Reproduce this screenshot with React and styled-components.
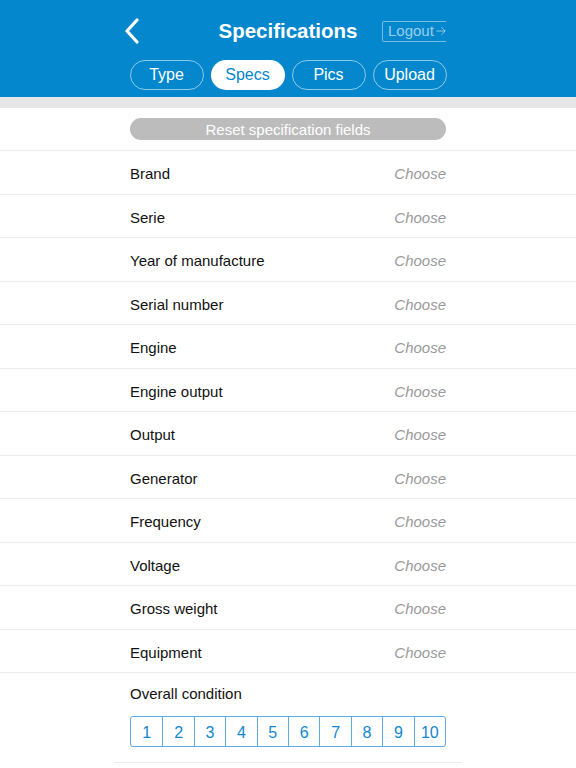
import React from 'react';
import styled, { createGlobalStyle } from 'styled-components';

const GlobalStyle = createGlobalStyle`
  body {
    margin: 0;
    background: #ffffff;
    font-family: "Liberation Sans", Arial, sans-serif;
  }
`;

const BLUE = '#0487cc';

const Header = styled.header`
  background: ${BLUE};
  height: 97px;
  display: flex;
  flex-direction: column;
  align-items: center;
`;

const TopBar = styled.div`
  width: 316px;
  height: 60px;
  display: flex;
  align-items: center;
  justify-content: space-between;
  padding-top: 2px;
  box-sizing: border-box;
`;

const BackButton = styled.button`
  background: none;
  border: none;
  padding: 0;
  margin-left: -6px;
  width: 70px;
  height: 30px;
  display: flex;
  align-items: center;
  cursor: pointer;
`;

const Title = styled.h1`
  margin: 0;
  font-size: 20.5px;
  font-weight: bold;
  color: #ffffff;
`;

const LogoutButton = styled.button`
  width: 64px;
  height: 21px;
  box-sizing: border-box;
  border: 1px solid rgba(255, 255, 255, 0.45);
  border-right: none;
  border-radius: 2px 0 0 2px;
  background: none;
  color: rgba(255, 255, 255, 0.6);
  font-family: "Liberation Sans", Arial, sans-serif;
  font-size: 15px;
  line-height: 15px;
  padding: 0 0 1px 5px;
  display: flex;
  align-items: center;
  gap: 2px;
  white-space: nowrap;
  overflow: hidden;
`;

const Tabs = styled.nav`
  display: flex;
  gap: 7px;
`;

const Tab = styled.button`
  width: 74px;
  height: 30px;
  border-radius: 15px;
  border: 1px solid rgba(255, 255, 255, 0.55);
  background: ${(p) => (p.active ? '#ffffff' : 'transparent')};
  color: ${(p) => (p.active ? BLUE : '#ffffff')};
  font-family: "Liberation Sans", Arial, sans-serif;
  font-size: 16px;
  padding: 0;
`;

const Divider = styled.div`
  height: 11px;
  background: #e6e6e6;
`;

const ResetArea = styled.div`
  height: 43px;
  display: flex;
  align-items: center;
  justify-content: center;
  border-bottom: 1px solid #ececec;
  box-sizing: border-box;
`;

const ResetButton = styled.button`
  width: 316px;
  height: 22px;
  border: none;
  border-radius: 11px;
  background: #bcbcbc;
  color: #ffffff;
  font-family: "Liberation Sans", Arial, sans-serif;
  font-size: 15px;
  padding: 0;
`;

const Row = styled.div`
  height: 43.5px;
  box-sizing: border-box;
  border-bottom: 1px solid #ececec;
  display: flex;
  justify-content: center;
`;

const RowInner = styled.div`
  width: 316px;
  display: flex;
  align-items: center;
  justify-content: space-between;
  padding-top: 3px;
`;

const Label = styled.span`
  font-size: 15px;
  color: #111111;
`;

const Choose = styled.span`
  font-size: 15px;
  font-style: italic;
  color: #9a9a9a;
`;

const Condition = styled.section`
  width: 348px;
  margin: 0 auto;
  padding: 12px 16px 15px;
  box-sizing: border-box;
  border-bottom: 1px solid #ececec;
`;

const ConditionLabel = styled.div`
  font-size: 15px;
  color: #111111;
  margin-bottom: 14px;
`;

const Segments = styled.div`
  display: grid;
  grid-template-columns: repeat(10, 1fr);
  height: 31px;
  border: 1px solid #5cade4;
  border-radius: 3px;
  box-sizing: border-box;
`;

const Segment = styled.button`
  border: none;
  border-left: ${(p) => (p.first ? 'none' : '1px solid #5cade4')};
  background: none;
  color: #1286cf;
  font-family: "Liberation Sans", Arial, sans-serif;
  font-size: 16px;
  padding: 2px 0 0;
`;

const fields = [
  'Brand',
  'Serie',
  'Year of manufacture',
  'Serial number',
  'Engine',
  'Engine output',
  'Output',
  'Generator',
  'Frequency',
  'Voltage',
  'Gross weight',
  'Equipment',
];

const tabs = ['Type', 'Specs', 'Pics', 'Upload'];

const App = () => (
  <>
    <GlobalStyle />
    <Header>
      <TopBar>
        <BackButton aria-label="Back">
          <svg width="16" height="26" viewBox="0 0 16 26">
            <path d="M13 2 L3 13 L13 24" fill="none" stroke="#fff" strokeWidth="3.2" strokeLinecap="round" strokeLinejoin="round" />
          </svg>
        </BackButton>
        <Title>Specifications</Title>
        <LogoutButton>
          Logout
          <svg width="11" height="10" viewBox="0 0 11 10">
            <path d="M0.5 5 H10 M6 1 L10 5 L6 9" fill="none" stroke="rgba(255,255,255,0.6)" strokeWidth="1" />
          </svg>
        </LogoutButton>
      </TopBar>
      <Tabs>
        {tabs.map((t) => (
          <Tab key={t} active={t === 'Specs'}>{t}</Tab>
        ))}
      </Tabs>
    </Header>
    <Divider />
    <ResetArea>
      <ResetButton>Reset specification fields</ResetButton>
    </ResetArea>
    {fields.map((f) => (
      <Row key={f}>
        <RowInner>
          <Label>{f}</Label>
          <Choose>Choose</Choose>
        </RowInner>
      </Row>
    ))}
    <Condition>
      <ConditionLabel>Overall condition</ConditionLabel>
      <Segments>
        {Array.from({ length: 10 }, (_, i) => (
          <Segment key={i} first={i === 0}>{i + 1}</Segment>
        ))}
      </Segments>
    </Condition>
  </>
);

export default App;
